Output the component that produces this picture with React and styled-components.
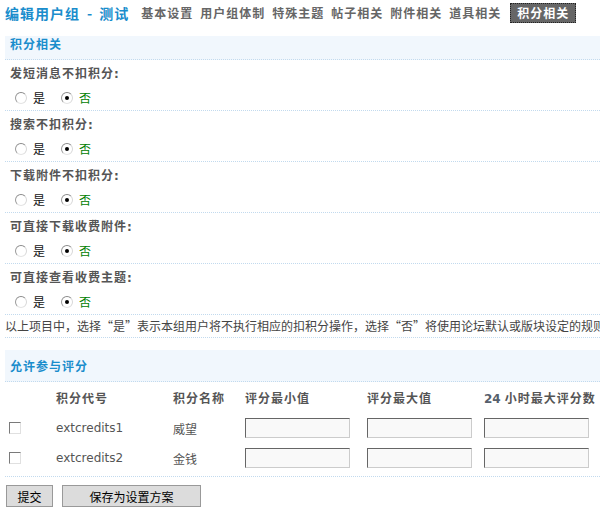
import React from 'react';
import styled, { createGlobalStyle } from 'styled-components';

const Global = createGlobalStyle`
  html, body { margin: 0; padding: 0; background: #fff; }
  body {
    font-size: 12px;
    font-family: "DejaVu Sans", "Noto Sans CJK SC", sans-serif;
    color: #333;
    overflow: hidden;
  }
`;

const cjk = `"Noto Sans CJK SC", sans-serif`;
const line = '1px dotted #c2daee';

const Page = styled.div`
  width: 600px;
  height: 510px;
  padding-left: 5px;
  box-sizing: border-box;
  overflow: hidden;
`;

const Header = styled.div`
  display: flex;
  align-items: center;
  height: 20px;
  margin-top: 3px;
  margin-bottom: 13px;
  white-space: nowrap;
`;

const Title = styled.h1`
  margin: 0 12px 0 0;
  font-family: ${cjk};
  font-size: 14px;
  font-weight: bold;
  letter-spacing: 1px;
  line-height: 20px;
  color: #1a8dcc;
`;

const Dash = styled.span`
  margin: 0 6px 0 7px;
`;

const Tab = styled.span`
  font-family: ${cjk};
  font-weight: bold;
  letter-spacing: 1px;
  line-height: 18px;
  margin-right: 7px;
  margin-left: ${p => (p.$active ? '2px' : '0')};
  padding: ${p => (p.$active ? '0 6px' : '0')};
  color: ${p => (p.$active ? '#fff' : '#666')};
  background: ${p => (p.$active ? '#666' : 'transparent')};
  border: ${p => (p.$active ? '1px dotted #222' : '0')};
`;

const SectionBar = styled.div`
  background: #f1f7fd;
  border-bottom: ${line};
  color: #1a8dcc;
  font-family: ${cjk};
  font-weight: bold;
  letter-spacing: 1px;
  padding: ${p => (p.$tall ? '0 5px' : '1px 5px 8px')};
  line-height: ${p => (p.$tall ? '31px' : '14px')};
  white-space: nowrap;
`;

const Item = styled.div`
  border-bottom: ${line};
`;

const ItemLabel = styled.div`
  height: 25px;
  line-height: 25px;
  padding-left: 5px;
  font-family: ${cjk};
  font-weight: bold;
  letter-spacing: 1px;
  color: #555;
`;

const Colon = styled.span`
  font-family: "DejaVu Sans", sans-serif;
`;

const Options = styled.div`
  height: 25px;
  display: flex;
  align-items: center;
  padding-left: 10px;
`;

const Option = styled.label`
  display: flex;
  align-items: center;
  margin-right: 16px;
  font-family: ${cjk};
  color: ${p => (p.$checked ? '#008000' : '#111')};
`;

const Radio = styled.span`
  position: relative;
  width: 10px;
  height: 10px;
  border-radius: 50%;
  border: 1px solid;
  border-color: #8a8a8a #d8d8d8 #e4e4e4 #9a9a9a;
  background: #fff;
  margin-right: 6px;
  &::after {
    content: '';
    display: ${p => (p.$checked ? 'block' : 'none')};
    position: absolute;
    left: 3px;
    top: 3px;
    width: 4px;
    height: 4px;
    border-radius: 50%;
    background: #000;
  }
`;

const Note = styled.div`
  height: 22px;
  line-height: 22px;
  border-bottom: ${line};
  font-family: ${cjk};
  color: #444;
  white-space: nowrap;
  overflow: hidden;
  margin-bottom: 12px;
`;

const Grid = styled.div`
  display: grid;
  grid-template-columns: 51px 117px 72px 122px 117px 1fr;
  grid-template-rows: 31px 30px 30px;
  align-items: center;
  padding-bottom: 3px;
  border-bottom: ${line};
  white-space: nowrap;
`;

const HeadCell = styled.div`
  font-family: ${cjk};
  font-weight: bold;
  letter-spacing: 1px;
  color: #555;
`;

const Num = styled.span`
  font-family: "DejaVu Sans", sans-serif;
  color: #56606c;
  letter-spacing: 0;
  margin-right: 4px;
`;

const Cell = styled.div`
  font-family: ${p => (p.$latin ? '"DejaVu Sans", sans-serif' : cjk)};
  color: #555;
  padding-left: ${p => (p.$pad ? '4px' : '0')};
  display: flex;
  align-items: center;
`;

const Checkbox = styled.span`
  width: 10px;
  height: 10px;
  border: 1px solid;
  border-color: #7a7a7a #e0e0e0 #e0e0e0 #7a7a7a;
  background: #fff;
`;

const Input = styled.input`
  width: 105px;
  height: 20px;
  box-sizing: border-box;
  margin: 0;
  padding: 0 3px;
  border: 1px solid;
  border-color: #666 #ccc #ccc #666;
  background: #f9f9f9;
  outline: none;
`;

const Buttons = styled.div`
  display: flex;
  gap: 9px;
  margin-top: 8px;
  padding-left: 1px;
`;

const Button = styled.button`
  width: ${p => p.$w}px;
  height: 22px;
  margin: 0;
  padding: 0;
  font-family: ${cjk};
  font-size: 12px;
  color: #000;
  background: #dcdcdc;
  border: 1px solid #999;
`;

const tabs = ['基本设置', '用户组体制', '特殊主题', '帖子相关', '附件相关', '道具相关'];
const items = ['发短消息不扣积分', '搜索不扣积分', '下载附件不扣积分', '可直接下载收费附件', '可直接查看收费主题'];
const credits = [
  { code: 'extcredits1', name: '威望' },
  { code: 'extcredits2', name: '金钱' },
];

export default function App() {
  return (
    <Page>
      <Global />
      <Header>
        <Title>
          编辑用户组<Dash>-</Dash>测试
        </Title>
        {tabs.map(t => (
          <Tab key={t}>{t}</Tab>
        ))}
        <Tab $active>积分相关</Tab>
      </Header>

      <SectionBar>积分相关</SectionBar>
      {items.map(label => (
        <Item key={label}>
          <ItemLabel>
            {label}
            <Colon>:</Colon>
          </ItemLabel>
          <Options>
            <Option>
              <Radio />是
            </Option>
            <Option $checked>
              <Radio $checked />否
            </Option>
          </Options>
        </Item>
      ))}
      <Note>
        以上项目中，选择“是”表示本组用户将不执行相应的扣积分操作，选择“否”将使用论坛默认或版块设定的规则
      </Note>

      <SectionBar $tall>允许参与评分</SectionBar>
      <Grid>
        <div />
        <HeadCell>积分代号</HeadCell>
        <HeadCell>积分名称</HeadCell>
        <HeadCell>评分最小值</HeadCell>
        <HeadCell>评分最大值</HeadCell>
        <HeadCell>
          <Num>24</Num>小时最大评分数
        </HeadCell>
        {credits.map(c => (
          <React.Fragment key={c.code}>
            <Cell $pad>
              <Checkbox />
            </Cell>
            <Cell $latin>{c.code}</Cell>
            <Cell>{c.name}</Cell>
            <Cell>
              <Input />
            </Cell>
            <Cell>
              <Input />
            </Cell>
            <Cell>
              <Input />
            </Cell>
          </React.Fragment>
        ))}
      </Grid>
      <Buttons>
        <Button $w={47}>提交</Button>
        <Button $w={139}>保存为设置方案</Button>
      </Buttons>
    </Page>
  );
}
